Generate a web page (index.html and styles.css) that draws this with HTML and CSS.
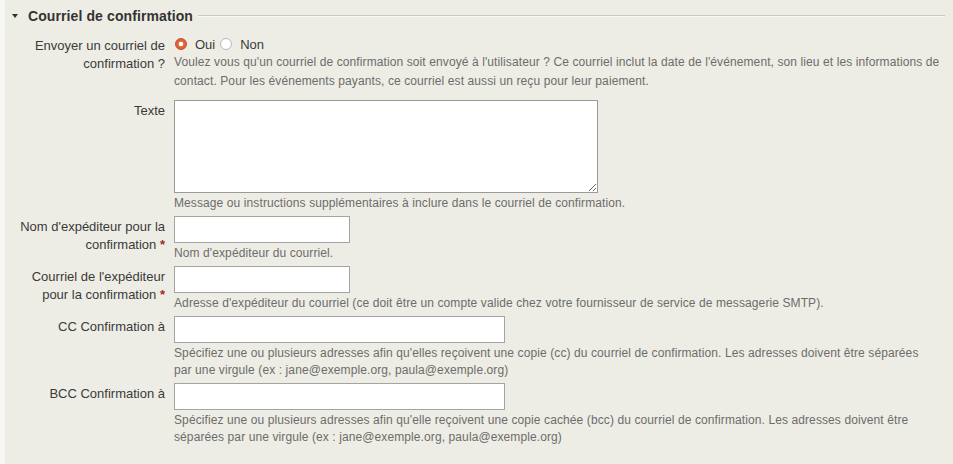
FILE: index.html
```html
<!DOCTYPE html>
<html lang="fr">
<head>
<meta charset="utf-8">
<title>Courriel de confirmation</title>
<link rel="stylesheet" href="styles.css">
</head>
<body>
<div class="page">
  <div class="fieldset">
    <div class="legend">
      <span class="arrow"></span>
      <span class="title">Courriel de confirmation</span>
      <span class="rule"></span>
    </div>

    <div class="row row-first">
      <div class="label">Envoyer un courriel de confirmation ?</div>
      <div class="field">
        <div class="radios">
          <span class="radio checked"></span><span class="opt">Oui</span>
          <span class="radio"></span><span class="opt">Non</span>
        </div>
        <div class="help">Voulez vous qu'un courriel de confirmation soit envoyé à l'utilisateur ? Ce courriel inclut la date de l'événement, son lieu et les informations de contact. Pour les événements payants, ce courriel est aussi un reçu pour leur paiement.</div>
      </div>
    </div>

    <div class="row">
      <div class="label">Texte</div>
      <div class="field">
        <textarea class="textarea"></textarea>
        <div class="help">Message ou instructions supplémentaires à inclure dans le courriel de confirmation.</div>
      </div>
    </div>

    <div class="row">
      <div class="label">Nom d'expéditeur pour la confirmation&nbsp;<span class="req">*</span></div>
      <div class="field">
        <input class="input short" type="text">
        <div class="help">Nom d'expéditeur du courriel.</div>
      </div>
    </div>

    <div class="row">
      <div class="label">Courriel de l'expéditeur pour la confirmation&nbsp;<span class="req">*</span></div>
      <div class="field">
        <input class="input short" type="text">
        <div class="help">Adresse d'expéditeur du courriel (ce doit être un compte valide chez votre fournisseur de service de messagerie SMTP).</div>
      </div>
    </div>

    <div class="row">
      <div class="label">CC Confirmation à</div>
      <div class="field">
        <input class="input long" type="text">
        <div class="help">Spécifiez une ou plusieurs adresses afin qu'elles reçoivent une copie (cc) du courriel de confirmation. Les adresses doivent être séparées par&nbsp;une virgule (ex : jane@exemple.org, paula@exemple.org)</div>
      </div>
    </div>

    <div class="row">
      <div class="label">BCC Confirmation à</div>
      <div class="field">
        <input class="input long" type="text">
        <div class="help">Spécifiez une ou plusieurs adresses afin qu'elle reçoivent une copie cachée (bcc) du courriel de confirmation. Les adresses doivent être séparées par une virgule (ex : jane@exemple.org, paula@exemple.org)</div>
      </div>
    </div>
  </div>
</div>
</body>
</html>
```

FILE: styles.css
```css
html, body {
  margin: 0;
  padding: 0;
}
body {
  background: #f6f6f2;
  font-family: "Liberation Sans", Arial, sans-serif;
  color: #3a3a3a;
}
.page {
  margin-left: 5px;
  min-height: 464px;
  background: #eeede5;
  box-sizing: border-box;
  padding-top: 6px;
}
.fieldset {
  padding-right: 8px;
}
.legend {
  display: flex;
  align-items: center;
  height: 20px;
  padding-left: 7px;
}
.arrow {
  width: 0;
  height: 0;
  border-left: 3.5px solid transparent;
  border-right: 3.5px solid transparent;
  border-top: 4px solid #333;
  margin-right: 10px;
}
.title {
  font-size: 14px;
  font-weight: bold;
  color: #333;
  letter-spacing: 0.1px;
  padding-right: 5px;
}
.rule {
  flex: 1;
  border-top: 1px solid #c9c9c1;
  border-bottom: 1px solid #f9f9f6;
  height: 0;
}
.row {
  display: grid;
  grid-template-columns: 160px 1fr;
  column-gap: 9px;
  margin-top: 4px;
}
.row-first {
  margin-top: 9px;
  margin-bottom: 9px;
}
.label {
  font-size: 13px;
  line-height: 18px;
  text-align: right;
  padding-left: 10px;
  padding-top: 2px;
  color: #3a3a3a;
}
.req {
  color: #9b2a2a;
  font-weight: bold;
}
.field {
  display: flex;
  flex-direction: column;
  align-items: flex-start;
  min-width: 0;
}
.radios {
  display: flex;
  align-items: center;
  height: 18px;
  font-size: 13px;
  color: #3a3a3a;
}
.radio {
  width: 12px;
  height: 12px;
  border-radius: 50%;
  box-sizing: border-box;
  border: 1px solid #b9b9b4;
  background: #fff;
  margin-left: 1px;
  margin-right: 8px;
}
.radio.checked {
  border: 1px solid #c2512a;
  background: radial-gradient(circle, #ffffff 0 2px, #e2693a 2.6px, #d9592b 100%);
}
.opt {
  margin-right: 4px;
}
.help {
  font-size: 12px;
  letter-spacing: 0.1px;
  line-height: 17px;
  color: #6c6c6c;
  margin-top: 2px;
}
.row-first .help {
  line-height: 19px;
  margin-top: 0;
}
.textarea {
  display: block;
  width: 424px;
  height: 93px;
  box-sizing: border-box;
  border: 1px solid #9a9a9a;
  background: #fff;
  margin: 0;
  font-family: inherit;
}
.input {
  display: block;
  height: 27px;
  box-sizing: border-box;
  border: 1px solid #a4a4a4;
  background: #fff;
  margin: 0;
  padding: 2px 4px;
  font-family: inherit;
  font-size: 13px;
}
.input.short {
  width: 176px;
}
.input.long {
  width: 331px;
}
```
